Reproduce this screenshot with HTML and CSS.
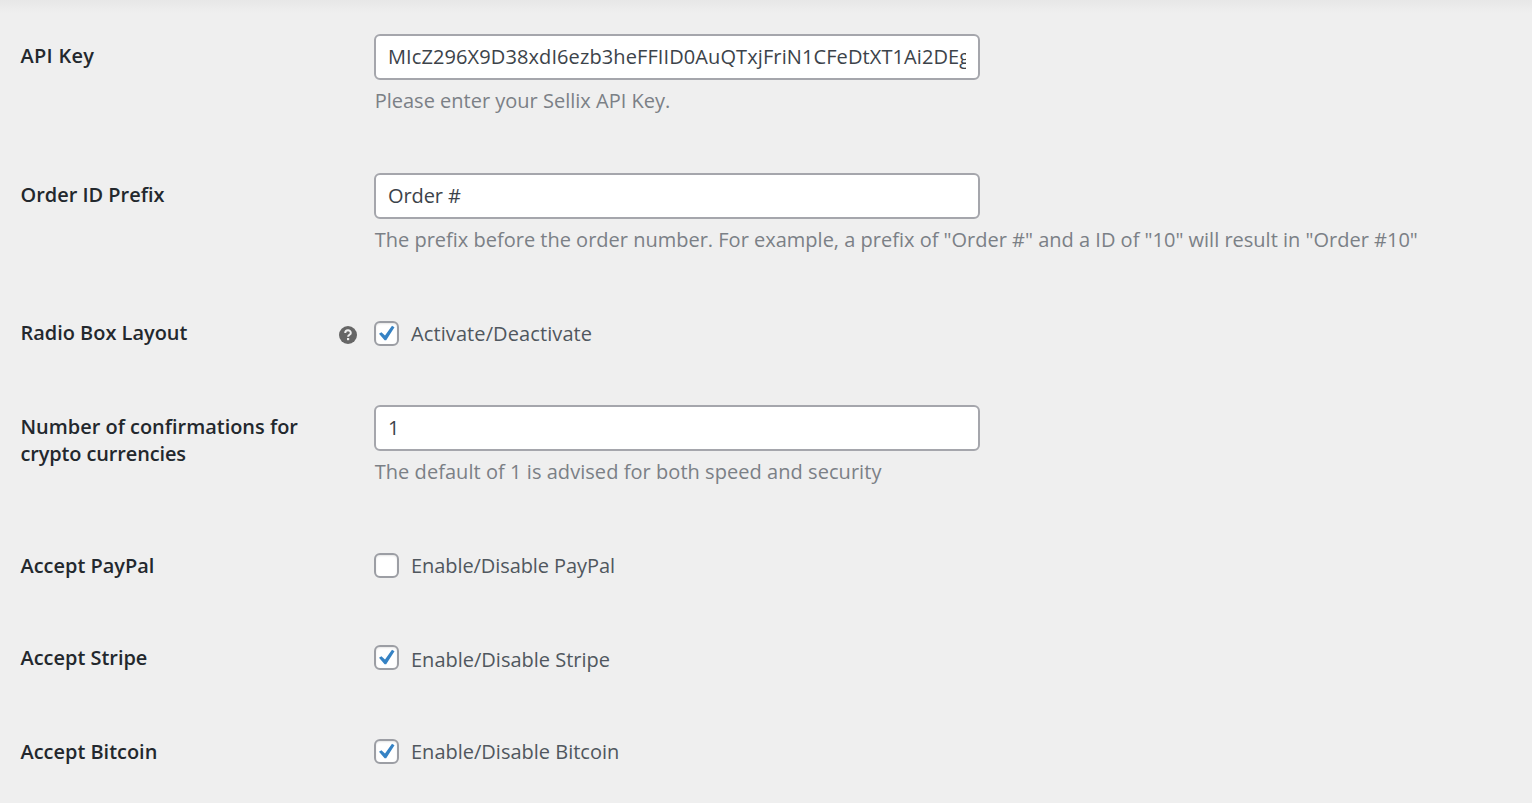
FILE: index.html
```html
<!DOCTYPE html>
<html lang="en">
<head>
<meta charset="utf-8">
<title>Sellix settings</title>
<link rel="stylesheet" href="styles.css">
</head>
<body>
<svg class="defs" width="0" height="0"><symbol id="tick" viewBox="0 0 24 24"><path d="M5 12.7 7.4 11.2 11 14.5 18 4.8 20.5 6.2 12.2 19.2H10.6Z" fill="#3582c4"/></symbol></svg>
<main class="settings">
  <div class="row tall">
    <div class="name"><span class="n-key">API Key</span></div>
    <div class="field"><div class="input"><span class="v-key">MIcZ296X9D38xdI6ezb3heFFIID0AuQTxjFriN1CFeDtXT1Ai2DEg</span></div>
    <p class="description">Please enter your Sellix API Key.</p></div>
  </div>
  <div class="row tall">
    <div class="name"><span>Order ID Prefix</span></div>
    <div class="field"><div class="input"><span class="v-order">Order #</span></div>
    <p class="description">The prefix before the order number. For example, a prefix of "Order #" and a ID of "10" will result in "Order #10"</p></div>
  </div>
  <div class="row">
    <div class="name raised"><span>Radio Box Layout</span>
      <svg class="help" viewBox="0 0 18 18"><circle cx="9" cy="9" r="9" fill="#666"/><path d="M6.2 7.1C6.2 3.4 11.8 3.5 11.8 6.9 11.8 8.8 9.1 8.7 9.1 10.8" fill="none" stroke="#efefef" stroke-width="2"/><path d="M8 12h2.2v2.2H8z" fill="#efefef"/></svg>
    </div>
    <div class="field check"><span class="box"><svg class="tick"><use href="#tick"/></svg></span><span class="c-radio">Activate/Deactivate</span></div>
  </div>
  <div class="row tall">
    <div class="name"><span>Number of confirmations for<br><span class="n-crypto">crypto currencies</span></span></div>
    <div class="field"><div class="input"><span>1</span></div>
    <p class="description d-conf">The default of 1 is advised for both speed and security</p></div>
  </div>
  <div class="row">
    <div class="name"><span>Accept PayPal</span></div>
    <div class="field check"><span class="box"></span><span class="c-paypal">Enable/Disable PayPal</span></div>
  </div>
  <div class="row">
    <div class="name raised"><span>Accept Stripe</span></div>
    <div class="field check"><span class="box box-raised"><svg class="tick"><use href="#tick"/></svg></span><span class="c-stripe">Enable/Disable Stripe</span></div>
  </div>
  <div class="row">
    <div class="name"><span>Accept Bitcoin</span></div>
    <div class="field check"><span class="box"><svg class="tick"><use href="#tick"/></svg></span><span>Enable/Disable Bitcoin</span></div>
  </div>
</main>
</body>
</html>
```
FILE: styles.css
```css
* { box-sizing: border-box; }
body { margin: 0; background: #fff; font-family: "Open Sans", "Noto Sans", sans-serif; font-size: 20px; color: #50575e; overflow: hidden; }
.defs { display: block; }
.settings { height: 803px; padding-top: 14px; background: linear-gradient(#e7e7e7, #efefef 13px); overflow: hidden; }
.row { display: grid; grid-template-columns: 354px 1fr; height: 93px; padding: 20px 0 0 20px; white-space: nowrap; }
.tall { height: 139px; }
.name { display: flex; justify-content: space-between; align-items: flex-start; padding: 8px 17px 0 0.5px; line-height: 27px; font-size: 19.95px; font-weight: 600; color: #23282d; }
.raised { padding-top: 7px; }
.n-key { letter-spacing: 0.3px; }
.n-crypto { letter-spacing: -0.12px; }
.help { width: 18px; height: 18px; margin-top: 7px; }
.input { width: 606px; height: 46px; padding: 0 12px; border: 2px solid #a5a6ac; border-radius: 6px; background: #fff; color: #3c434a; line-height: 42px; }
.input span { display: block; overflow: hidden; }
.input .v-key { letter-spacing: 0.1px; line-height: 41px; }
.v-order { letter-spacing: -0.1px; }
.description { margin: 7px 0 0; padding-left: 0.7px; line-height: 28px; color: #7b8086; }
.d-conf { letter-spacing: 0.05px; }
.check { display: flex; align-items: center; gap: 12px; height: 43px; }
.box { display: block; width: 25px; height: 25px; border: 2px solid #9c9ea4; border-radius: 6px; background: #fff; box-shadow: inset 0 1px 2px #0000001a; }
.box-raised { margin-bottom: 2px; }
.tick { display: block; width: 24px; height: 24px; margin: -2px; }
.c-radio { letter-spacing: 0.1px; }
.c-paypal { letter-spacing: -0.08px; }
.c-stripe { padding-top: 1px; }
```
